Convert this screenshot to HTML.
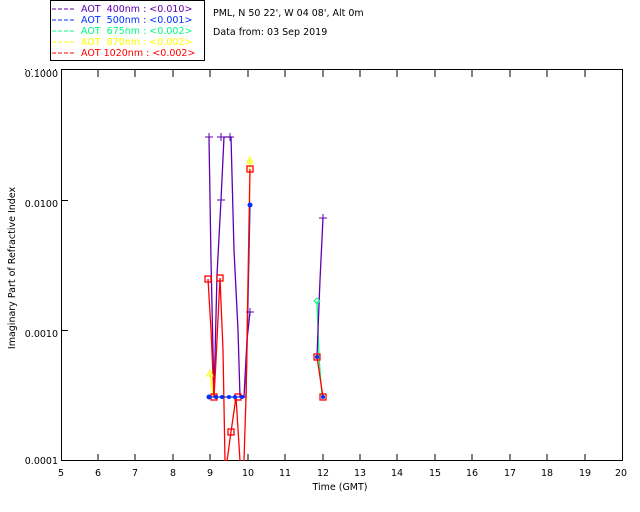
<!DOCTYPE html>
<html><head><meta charset="utf-8"><style>
html,body{margin:0;padding:0;background:#fff;}
svg{display:block;font-family:"DejaVu Sans","Liberation Sans",sans-serif;}
text{font-size:9.5px;}
</style></head><body>
<svg width="640" height="512" viewBox="0 0 640 512" xmlns="http://www.w3.org/2000/svg">
<rect width="640" height="512" fill="#fff"/>
<rect x="50.5" y="0.5" width="154" height="60" fill="none" stroke="#000"/>
<g font-size="9.5">
<line x1="52" y1="9" x2="74" y2="9" stroke="#6000b0" stroke-dasharray="4,2"/>
<text x="81" y="12" fill="#6000b0" xml:space="preserve">AOT  400nm : &lt;0.010&gt;</text>
<line x1="52" y1="20" x2="74" y2="20" stroke="#0030ff" stroke-dasharray="4,2"/>
<text x="81" y="23" fill="#0030ff" xml:space="preserve">AOT  500nm : &lt;0.001&gt;</text>
<line x1="52" y1="31" x2="74" y2="31" stroke="#00ff80" stroke-dasharray="4,2"/>
<text x="81" y="34" fill="#00ff80" xml:space="preserve">AOT  675nm : &lt;0.002&gt;</text>
<line x1="52" y1="42" x2="74" y2="42" stroke="#ffff00" stroke-dasharray="4,2"/>
<text x="81" y="45" fill="#ffff00" xml:space="preserve">AOT  870nm : &lt;0.002&gt;</text>
<line x1="52" y1="53" x2="74" y2="53" stroke="#ff0000" stroke-dasharray="4,2"/>
<text x="81" y="56" fill="#ff0000" xml:space="preserve">AOT 1020nm : &lt;0.002&gt;</text>
</g>
<text x="213" y="16">PML, N 50 22', W 04 08', Alt 0m</text>
<text x="213" y="35">Data from: 03 Sep 2019</text>
<line x1="25" y1="69.5" x2="57" y2="69.5" stroke="#000" stroke-dasharray="1,5"/>
<rect x="61.5" y="69.5" width="561" height="391" fill="none" stroke="#000"/>
<g stroke="#000">
<line x1="98" y1="461" x2="98" y2="454"/><line x1="98" y1="70" x2="98" y2="77"/>
<line x1="135" y1="461" x2="135" y2="454"/><line x1="135" y1="70" x2="135" y2="77"/>
<line x1="173" y1="461" x2="173" y2="454"/><line x1="173" y1="70" x2="173" y2="77"/>
<line x1="210" y1="461" x2="210" y2="454"/><line x1="210" y1="70" x2="210" y2="77"/>
<line x1="248" y1="461" x2="248" y2="454"/><line x1="248" y1="70" x2="248" y2="77"/>
<line x1="285" y1="461" x2="285" y2="454"/><line x1="285" y1="70" x2="285" y2="77"/>
<line x1="323" y1="461" x2="323" y2="454"/><line x1="323" y1="70" x2="323" y2="77"/>
<line x1="360" y1="461" x2="360" y2="454"/><line x1="360" y1="70" x2="360" y2="77"/>
<line x1="397" y1="461" x2="397" y2="454"/><line x1="397" y1="70" x2="397" y2="77"/>
<line x1="435" y1="461" x2="435" y2="454"/><line x1="435" y1="70" x2="435" y2="77"/>
<line x1="472" y1="461" x2="472" y2="454"/><line x1="472" y1="70" x2="472" y2="77"/>
<line x1="510" y1="461" x2="510" y2="454"/><line x1="510" y1="70" x2="510" y2="77"/>
<line x1="547" y1="461" x2="547" y2="454"/><line x1="547" y1="70" x2="547" y2="77"/>
<line x1="585" y1="461" x2="585" y2="454"/><line x1="585" y1="70" x2="585" y2="77"/>
<line x1="61" y1="200.5" x2="68" y2="200.5"/>
<line x1="61" y1="330.5" x2="68" y2="330.5"/>
</g>
<g text-anchor="end">
<text x="58" y="77">0.1000</text><text x="58" y="207">0.0100</text>
<text x="58" y="337">0.0010</text><text x="58" y="464">0.0001</text>
</g>
<g text-anchor="middle">
<text x="61" y="476">5</text><text x="98" y="476">6</text><text x="135" y="476">7</text><text x="173" y="476">8</text>
<text x="210" y="476">9</text><text x="248" y="476">10</text><text x="285" y="476">11</text><text x="323" y="476">12</text>
<text x="360" y="476">13</text><text x="397" y="476">14</text><text x="435" y="476">15</text><text x="472" y="476">16</text>
<text x="510" y="476">17</text><text x="547" y="476">18</text><text x="585" y="476">19</text><text x="621" y="476">20</text>
<text x="340" y="490">Time (GMT)</text>
<text transform="translate(15,268) rotate(-90)">Imaginary Part of Refractive Index</text>
</g>
<g fill="none" stroke-width="1.3">
<polyline stroke="#00ff80" points="317,301 319,357 322,397"/>
<polyline stroke="#ffff00" points="210,373 213,397 246,397 250,160"/>
<polyline stroke="#0030ff" points="209,397 246,397 250,205"/>
<polyline stroke="#6000b0" points="209,137 211,260 214,397 217,275 221,200 224,137 227,137 231,137 234,250 238,330 240,397 244,397 247,340 250,312"/>
<polyline stroke="#6000b0" points="323,218 320,280 318,330 317,357"/>
<polyline stroke="#ff0000" points="208,279 211,330 214,397 216,360 220,278 223,350 225,461"/>
<polyline stroke="#ff0000" points="227,461 231,432 236,397 240,461"/>
<polyline stroke="#ff0000" points="244,461 246,397 250,169"/>
<polyline stroke="#ff0000" points="317,357 323,397"/>
</g>
<g stroke="#6000b0" stroke-width="1">
<path d="M205,137h8M209,133v8M217,137h8M221,133v8M226,137h8M230,133v8M217,200h8M221,196v8M246,312h8M250,308v8M319,218h8M323,214v8"/>
</g>
<g fill="none" stroke="#ff0000" stroke-width="1.3">
<rect x="205" y="276" width="6" height="6"/><rect x="217" y="275" width="6" height="6"/>
<rect x="211" y="394" width="6" height="6"/><rect x="228" y="429" width="6" height="6"/>
<rect x="235" y="394" width="6" height="6"/><rect x="247" y="166" width="6" height="6"/>
<rect x="314" y="354" width="6" height="6"/><rect x="320" y="394" width="6" height="6"/>
</g>
<g fill="#0030ff">
<circle cx="209" cy="397" r="2.5"/><circle cx="216" cy="397" r="2"/><circle cx="222" cy="397" r="2"/>
<circle cx="229" cy="397" r="2"/><circle cx="235" cy="397" r="2"/><circle cx="242" cy="397" r="2"/>
<circle cx="250" cy="205" r="2.5"/><circle cx="317" cy="357" r="2"/><circle cx="323" cy="397" r="2"/>
</g>
<g fill="none" stroke="#ffff00"><path d="M207,376l3,-6l3,6z M247,163l3,-6l3,6z"/></g>
<path d="M317,298l3,3l-3,3l-3,-3z" fill="none" stroke="#00ff80"/>
</svg>
</body></html>
